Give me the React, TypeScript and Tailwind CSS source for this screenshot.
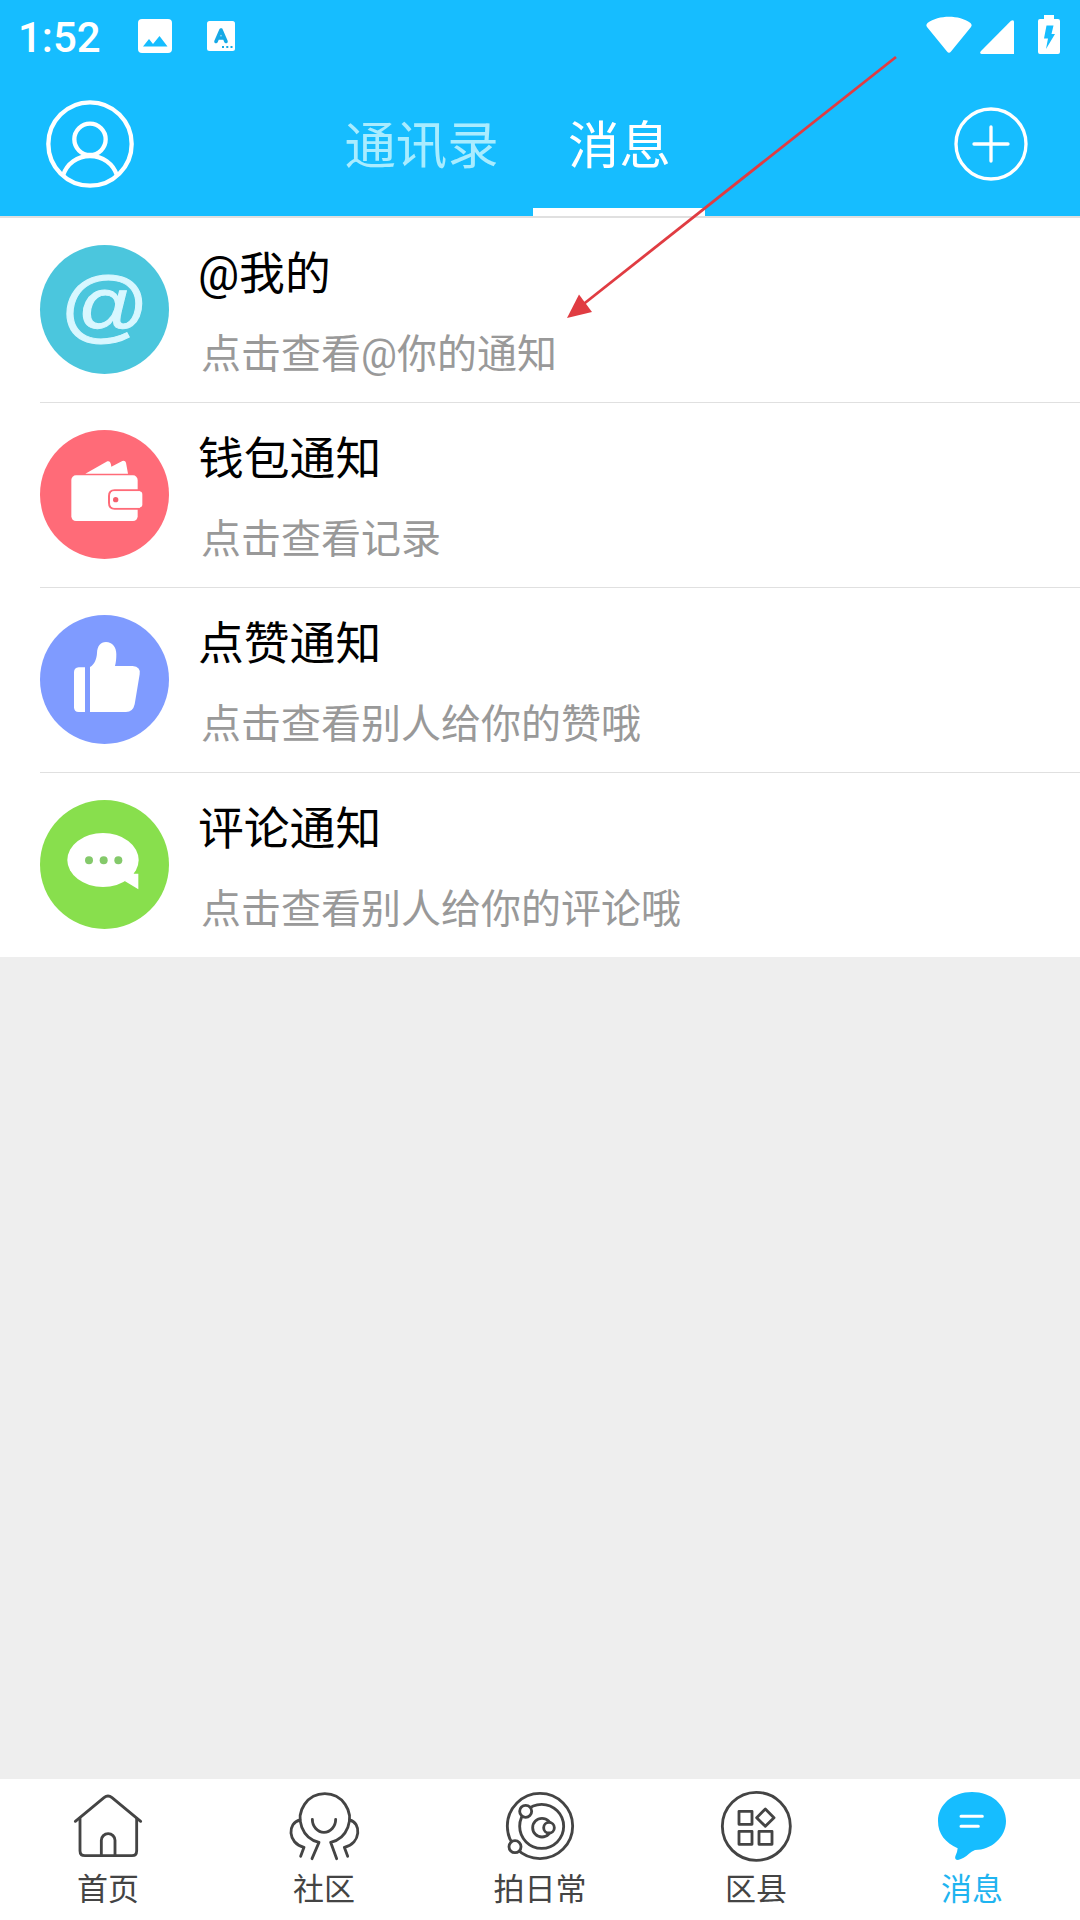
import React from 'react';

interface Notice {
  id: string;
  title: string;
  subtitle: string;
  icon: React.ReactNode;
}

interface NavItem {
  id: string;
  label: string;
  icon: React.ReactNode;
  active?: boolean;
}

const MentionIcon = () => (
  <div className="flex h-[129px] w-[129px] items-center justify-center rounded-full bg-[#4bc6dd] pb-2 font-['Liberation_Sans',sans-serif] text-[80px] leading-none text-[#d8f7ff]">
    <span className="scale-x-110 [-webkit-text-stroke:1px_#d8f7ff]">@</span>
  </div>
);

const WalletIcon = () => (
  <svg viewBox="0 0 387 387" className="h-[129px] w-[129px]">
    <circle cx="193.5" cy="193.5" r="193.5" fill="#ff6b78" />
    <path d="M136 131 L202 94 Q212 91 214 110 L247 93 Q256 91 258 98 L264 131 Z" fill="#fff" />
    <rect x="94" y="136" width="199" height="137" rx="14" fill="#fff" />
    <path d="M300 181 H224 Q207 181 207 198 V218 Q207 236 224 236 H300" fill="#fff" stroke="#ff6b78" strokeWidth="6" />
    <rect x="212" y="184" width="95" height="49" rx="10" fill="#fff" />
    <circle cx="227" cy="209" r="8" fill="#f4606d" />
  </svg>
);

const LikeIcon = () => (
  <svg viewBox="0 0 387 387" className="h-[129px] w-[129px]">
    <circle cx="193.5" cy="193.5" r="193.5" fill="#7f9bff" />
    <path d="M135 157 H116 Q102 159 102 171 V277 Q102 291 116 291 H135 Z" fill="#fff" />
    <path d="M150 291 V156 C164 148 170 132 171 114 C172 94 181 81 198 81 C217 81 229 96 229 118 C229 132 228 142 225 153 H278 Q303 155 299 178 L284 268 Q279 291 258 291 Z" fill="#fff" />
  </svg>
);

const CommentIcon = () => (
  <svg viewBox="0 0 387 387" className="h-[129px] w-[129px]">
    <circle cx="193.5" cy="193.5" r="193.5" fill="#88df4d" />
    <ellipse cx="189" cy="180" rx="107" ry="81" fill="#fff" />
    <path d="M254 243 L295 268 V221 H280 L290 200 Z" fill="#fff" />
    <circle cx="147" cy="181" r="12" fill="#84c96a" />
    <circle cx="191" cy="181" r="12" fill="#84c96a" />
    <circle cx="235" cy="181" r="12" fill="#84c96a" />
  </svg>
);

const NavIcon = ({ children }: { children: React.ReactNode }) => (
  <svg
    viewBox="0 0 216 216"
    className="h-[72px] w-[72px]"
    fill="none"
    stroke="#444"
    strokeWidth="8.5"
    strokeLinecap="round"
    strokeLinejoin="round"
  >
    {children}
  </svg>
);

const notices: Notice[] = [
  { id: 'mention', title: '@我的', subtitle: '点击查看@你的通知', icon: <MentionIcon /> },
  { id: 'wallet', title: '钱包通知', subtitle: '点击查看记录', icon: <WalletIcon /> },
  { id: 'like', title: '点赞通知', subtitle: '点击查看别人给你的赞哦', icon: <LikeIcon /> },
  { id: 'comment', title: '评论通知', subtitle: '点击查看别人给你的评论哦', icon: <CommentIcon /> },
];

const navItems: NavItem[] = [
  {
    id: 'home',
    label: '首页',
    icon: (
      <NavIcon>
        <path d="M10 94 L96 23 Q108 13 120 23 L206 94" />
        <path d="M24 86 V182 Q24 197 39 197 H180 Q194 197 194 182 V86" />
        <path d="M88 197 V151 A20.5 20 0 0 1 129 151 V197" />
      </NavIcon>
    ),
  },
  {
    id: 'community',
    label: '社区',
    icon: (
      <NavIcon>
        <path d="M72 206 L93 157 A74 74 0 1 1 128 157 L146 206" />
        <path d="M73 88 A35 39 0 0 0 143 88" />
        <path d="M36 90 C-2 98 -2 160 48 172 L38 199" />
        <path d="M185 90 C220 98 220 160 169 172 L179 199" />
      </NavIcon>
    ),
  },
  {
    id: 'daily',
    label: '拍日常',
    icon: (
      <NavIcon>
        <circle cx="108" cy="108" r="98" />
        <circle cx="113" cy="109" r="66" />
        <circle cx="114" cy="113" r="28" />
        <circle cx="135" cy="113" r="16" fill="#fff" />
        <circle cx="65" cy="64" r="18" fill="#fff" />
        <circle cx="33" cy="170" r="18" fill="#fff" />
      </NavIcon>
    ),
  },
  {
    id: 'county',
    label: '区县',
    icon: (
      <NavIcon>
        <circle cx="109" cy="109" r="102" />
        <rect x="57" y="64" width="39" height="39" />
        <path d="M136 57 L162 83 L136 109 L110 83 Z" />
        <rect x="57" y="124" width="39" height="39" />
        <rect x="117" y="124" width="39" height="39" />
      </NavIcon>
    ),
  },
  {
    id: 'message',
    label: '消息',
    active: true,
    icon: (
      <svg viewBox="0 0 216 216" className="h-[72px] w-[72px]">
        <path
          d="M108 6 C166 6 210 44 210 93 C210 142 166 180 117 180 Q106 184 98 192 Q84 206 66 210 Q55 210 58 199 Q64 188 65 175 C28 158 6 132 6 93 C6 44 50 6 108 6 Z"
          fill="#16bdff"
        />
        <path d="M75 79 H139 M75 109 H127" stroke="#fff" strokeWidth="9" strokeLinecap="round" />
      </svg>
    ),
  },
];

const StatusBar = () => (
  <div className="flex h-[72px] items-start justify-between pl-[18px] pr-5">
    <div className="flex">
      <span className="mt-[14px] w-[120px] font-['Roboto',sans-serif] text-[42px] font-medium leading-[48px] text-white">
        1:52
      </span>
      <svg viewBox="0 0 34 34" className="mt-[19px] h-[34px] w-[34px]">
        <rect width="34" height="34" rx="4" fill="#fff" />
        <path d="M5 27.500 L11 20 L15 25 L21.500 17 L29.500 27.500 Z" fill="#16bdff" />
      </svg>
      <svg viewBox="0 0 28 30" className="ml-[35px] mt-[21px] h-[30px] w-7">
        <rect width="28" height="30" rx="2.500" fill="#fff" />
        <path d="M9 20.500 L14 9 L19 20.500 M11 17 H17" fill="none" stroke="#16a9e6" strokeWidth="3.600" strokeLinecap="round" strokeLinejoin="round" />
        <path d="M15 26 h2 M19.300 26 h2 M23.500 26 h2" stroke="#16a9e6" strokeWidth="2.200" />
      </svg>
    </div>
    <div className="flex">
      <svg viewBox="0 0 46 37" className="mt-[16px] h-[37px] w-[46px]">
        <path d="M1.500 7 C13 -1.200 33 -1.200 44.500 7 Q46.500 9 45 11 L25 35.500 Q23 38 21 35.500 L1 11 Q-0.500 9 1.500 7 Z" fill="#fff" />
      </svg>
      <svg viewBox="0 0 34 34" className="ml-2 mt-[20px] h-[34px] w-[34px]">
        <path d="M31 0.800 Q34 -1 34 2 V34 H1.500 Q-1 33.500 1 31 Z" fill="#fff" />
      </svg>
      <svg viewBox="0 0 22 39" className="ml-6 mt-[15px] h-[39px] w-[22px]">
        <path d="M6 0 H16 V4 H20 Q22 4 22 6 V37 Q22 39 20 39 H2 Q0 39 0 37 V6 Q0 4 2 4 H6 Z" fill="#fff" />
        <path d="M8.500 10.500 H15.500 L13.500 19 H17 L8 34 L10 23.500 H6 Z" fill="#16bdff" />
      </svg>
    </div>
  </div>
);

const Header = () => (
  <header className="bg-[#16bdff]">
    <StatusBar />
    <div className="flex h-36 items-center">
      <svg viewBox="0 0 264 264" className="ml-[46px] h-[88px] w-[88px]" fill="none" stroke="#fff" strokeWidth="13">
        <circle cx="132" cy="132" r="125" />
        <circle cx="132" cy="118" r="47" />
        <path d="M51 226 C63 190 94 168 132 168 C170 168 201 190 213 226" />
      </svg>
      <div className="ml-[176px] flex h-full text-[51.4px] leading-[52px]">
        <div className="flex w-[223px] items-center justify-center pt-1.5 text-[#a9ecff]">通讯录</div>
        <div className="flex w-[172px] items-center justify-center border-b-8 border-white pl-px pt-3.5 text-white">消息</div>
      </div>
      <svg viewBox="0 0 222 222" className="ml-[249px] h-[74px] w-[74px]" fill="none" stroke="#fff" strokeWidth="10">
        <circle cx="111" cy="111" r="105" />
        <path d="M111 60 V162 M60 111 H162" strokeLinecap="round" />
      </svg>
    </div>
  </header>
);

const NoticeRow = ({ notice, last }: { notice: Notice; last: boolean }) => (
  <div className="pl-10">
    <div className={last ? 'flex h-[184px]' : 'flex h-[185px] border-b border-[#e0e0e0]'}>
      <div className="mt-[27px]">{notice.icon}</div>
      <div className="ml-[29px] pt-[33px]">
        <div className="text-[45.8px] leading-[48px] text-black">{notice.title}</div>
        <div className="ml-[3px] mt-9 text-[40px] leading-[40px] text-[#999]">{notice.subtitle}</div>
      </div>
    </div>
  </div>
);

const BottomNav = () => (
  <nav className="grid h-[141px] grid-cols-5 bg-white">
    {navItems.map((item) => (
      <div key={item.id} className="flex flex-col items-center pt-[11px]">
        {item.icon}
        <span className={item.active ? 'mt-3 text-[31px] leading-[31px] text-[#1fb4f0]' : 'mt-3 text-[31px] leading-[31px] text-[#444]'}>
          {item.label}
        </span>
      </div>
    ))}
  </nav>
);

export default function App() {
  return (
    <div className="relative flex h-[1920px] w-[1080px] flex-col overflow-hidden bg-[#eeeeee] font-['Roboto','Noto_Sans_CJK_SC',sans-serif]">
      <Header />
      <main className="flex-1">
        <div className="border-t-2 border-[#e0e0e0] bg-white">
          {notices.map((notice, index) => (
            <NoticeRow key={notice.id} notice={notice} last={index === notices.length - 1} />
          ))}
        </div>
      </main>
      <BottomNav />

      {/* Pointer towards the first notice */}
      <svg viewBox="0 0 1080 400" className="pointer-events-none absolute left-0 top-0 h-[400px] w-[1080px]">
        <path d="M896 57 L583 304.500" stroke="#e03c42" strokeWidth="2.800" />
        <path d="M567 318 L579 294.500 L592 312 Z" fill="#e03c42" />
      </svg>
    </div>
  );
}
